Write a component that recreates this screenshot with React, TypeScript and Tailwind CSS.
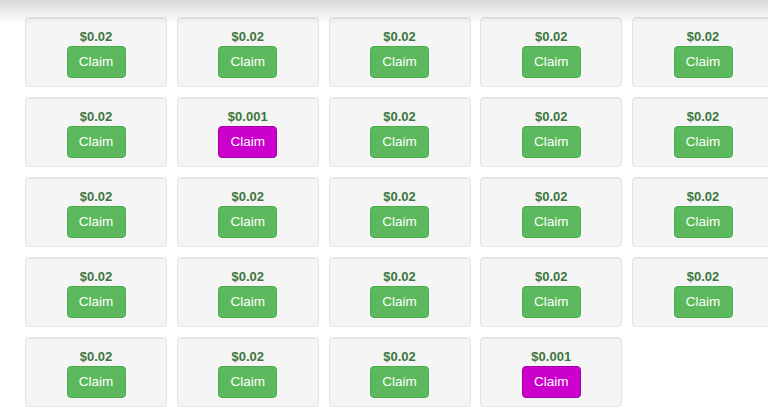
import React from 'react';

type Reward = { amount: string; bonus?: boolean };

// 24 faucet boxes, two of them are the purple "bonus" ones
const rewards: Reward[] = Array.from({ length: 24 }, (_, i) =>
  i === 6 || i === 23 ? { amount: '$0.001', bonus: true } : { amount: '$0.02' }
);

const RewardCard: React.FC<{ reward: Reward }> = ({ reward }) => (
  <div className="h-[70px] bg-[#f5f5f5] border border-[#e3e3e3] rounded-[4px] shadow-[inset_0_1px_1px_rgba(0,0,0,0.05)] pt-[10px] flex flex-col items-center">
    <div className="h-[18px] leading-[18px] text-[13px] font-bold text-[#3c763d]">
      {reward.amount}
    </div>
    <button
      className={`w-[59px] h-[32px] rounded-[4px] border text-[13.5px] text-white leading-none ${
        reward.bonus ? 'bg-[#cc00cc] border-[#a300a3]' : 'bg-[#5cb85c] border-[#4cae4c]'
      }`}
    >
      Claim
    </button>
  </div>
);

const App: React.FC = () => {
  return (
    <div
      className="relative w-[768px] h-[409px] overflow-hidden bg-white"
      style={{ fontFamily: '"Liberation Sans", Arial, sans-serif' }}
    >
      {/* shadow from the header bar above */}
      <div className="pointer-events-none absolute inset-x-0 top-0 h-[24px] bg-linear-to-b from-black/15 to-transparent z-10" />

      <div className="pt-[17px] pl-[25px]">
        <div className="grid grid-cols-[repeat(5,142px)] gap-x-[9.75px] gap-y-[10px] w-max">
          {rewards.map((r, i) => (
            <RewardCard key={i} reward={r} />
          ))}
        </div>
      </div>
    </div>
  );
};

export default App;
